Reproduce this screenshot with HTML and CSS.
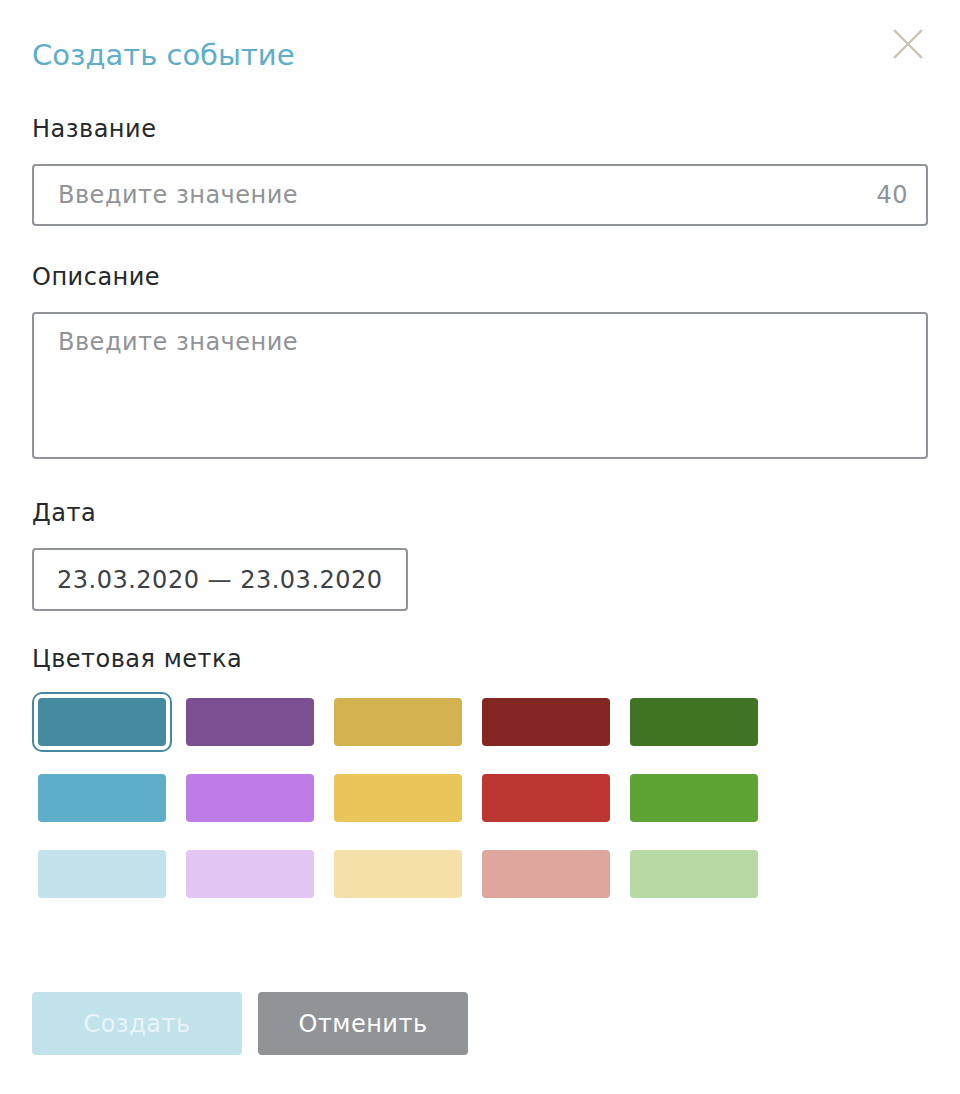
FILE: index.html
```html
<!DOCTYPE html>
<html lang="ru">
<head>
<meta charset="utf-8">
<title>Создать событие</title>
<link rel="stylesheet" href="styles.css">
</head>
<body>
<div class="dialog">
  <div class="header">
    <h1 class="title">Создать событие</h1>
    <button class="close" aria-label="Закрыть">
      <svg width="30" height="30" viewBox="0 0 30 30"><path d="M1 1 L29 29 M29 1 L1 29" stroke="#cdc3b5" stroke-width="2.4" fill="none"/></svg>
    </button>
  </div>

  <div class="field">
    <div class="label">Название</div>
    <div class="input">
      <span class="placeholder">Введите значение</span>
      <span class="counter">40</span>
    </div>
  </div>

  <div class="field field-desc">
    <div class="label">Описание</div>
    <div class="textarea">
      <span class="placeholder">Введите значение</span>
    </div>
  </div>

  <div class="field field-date">
    <div class="label">Дата</div>
    <div class="date">23.03.2020 — 23.03.2020</div>
  </div>

  <div class="field">
    <div class="label">Цветовая метка</div>
    <div class="swatches">
      <span class="swatch selected c1"></span>
      <span class="swatch c2"></span>
      <span class="swatch c3"></span>
      <span class="swatch c4"></span>
      <span class="swatch c5"></span>
      <span class="swatch c6"></span>
      <span class="swatch c7"></span>
      <span class="swatch c8"></span>
      <span class="swatch c9"></span>
      <span class="swatch c10"></span>
      <span class="swatch c11"></span>
      <span class="swatch c12"></span>
      <span class="swatch c13"></span>
      <span class="swatch c14"></span>
      <span class="swatch c15"></span>
    </div>
  </div>

  <div class="actions">
    <button class="btn btn-primary" disabled>Создать</button>
    <button class="btn btn-secondary">Отменить</button>
  </div>
</div>
</body>
</html>
```

FILE: styles.css
```css
* { box-sizing: border-box; }
html, body { margin: 0; background: #ffffff; }
body {
  font-family: "DejaVu Sans", "Open Sans", sans-serif;
  color: #25292c;
  letter-spacing: 0.5px;
}
.dialog {
  width: 960px;
  padding: 26px 32px 0 32px;
}
.header {
  display: flex;
  justify-content: space-between;
  align-items: flex-start;
  height: 87px;
}
.title {
  margin: 11px 0 0 0;
  font-size: 29px;
  line-height: 36px;
  font-weight: 400;
  letter-spacing: 0;
  color: #5eaec9;
}
.close {
  border: 0;
  background: transparent;
  padding: 0;
  margin: 3px 5px 0 0;
  width: 30px;
  height: 30px;
  cursor: pointer;
}
.close svg { display: block; }
.field { margin-bottom: 35px; }
.field-desc { margin-bottom: 38px; }
.field-date { margin-bottom: 32px; }
.label {
  font-size: 24px;
  line-height: 32px;
  margin-bottom: 19px;
}
.input, .textarea, .date {
  border: 2px solid #909397;
  border-radius: 4px;
  font-size: 24px;
}
.input {
  height: 62px;
  display: flex;
  align-items: center;
  justify-content: space-between;
  padding: 0 18px 0 24px;
}
.textarea {
  height: 147px;
  padding: 12px 24px;
  line-height: 32px;
}
.placeholder { color: #909397; }
.counter { color: #909397; }
.date {
  display: inline-flex;
  align-items: center;
  height: 63px;
  padding: 0 23px;
  color: #3c4246;
}
.swatches {
  display: grid;
  grid-template-columns: repeat(5, 128px);
  grid-auto-rows: 48px;
  column-gap: 20px;
  row-gap: 28px;
  padding: 0 6px;
  margin-top: 23px;
}
.swatch {
  display: block;
  border-radius: 4px;
}
.swatch.selected {
  outline: 2px solid #468a9f;
  outline-offset: 4px;
}
.c1 { background: #468a9f; }
.c2 { background: #7b5092; }
.c3 { background: #d4b24f; }
.c4 { background: #842622; }
.c5 { background: #417324; }
.c6 { background: #5eaec9; }
.c7 { background: #bf7be6; }
.c8 { background: #eac55a; }
.c9 { background: #bc3631; }
.c10 { background: #5ea434; }
.c11 { background: #c2e2ec; }
.c12 { background: #e2c5f2; }
.c13 { background: #f5e0aa; }
.c14 { background: #dfa69e; }
.c15 { background: #b7d9a3; }
.actions {
  display: flex;
  gap: 16px;
  margin-top: 94px;
}
.btn {
  width: 210px;
  height: 63px;
  border: 0;
  border-radius: 4px;
  font-family: inherit;
  font-size: 24px;
  letter-spacing: 0.5px;
  color: #ffffff;
}
.btn-primary { background: #c2e2ec; color: #e9f4f8; }
.btn-secondary { background: #919497; cursor: pointer; }
```
